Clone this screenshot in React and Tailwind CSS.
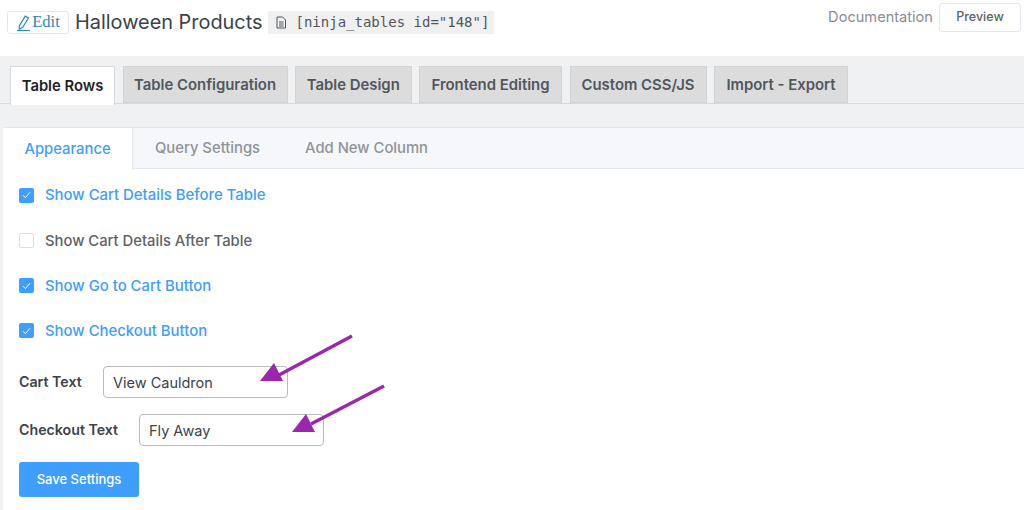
import React from 'react';

const mainTabs = [
  { label: 'Table Rows', active: true, width: 'w-[105px]' },
  { label: 'Table Configuration', width: 'w-[165px]' },
  { label: 'Table Design', width: 'w-[116.5px]' },
  { label: 'Frontend Editing', width: 'w-[143px]' },
  { label: 'Custom CSS/JS', width: 'w-[137px]' },
  { label: 'Import - Export', width: 'w-[134px]' },
];

const options = [
  { label: 'Show Cart Details Before Table', checked: true },
  { label: 'Show Cart Details After Table', checked: false },
  { label: 'Show Go to Cart Button', checked: true },
  { label: 'Show Checkout Button', checked: true },
];

const Checkbox = ({ checked }) => (
  <span
    className={
      checked
        ? 'flex h-[15px] w-[15px] items-center justify-center rounded-[2px] bg-[#409eff]'
        : 'flex h-[15px] w-[15px] items-center justify-center rounded-[2px] border border-[#dcdfe6] bg-white'
    }
  >
    {checked && (
      <svg width="9" height="8" viewBox="0 0 9 8" fill="none">
        <path d="M1 4.2 L3.4 6.6 L8 1.2" stroke="white" strokeWidth="1" />
      </svg>
    )}
  </span>
);

const App = () => {
  return (
    <div className="relative h-[510px] w-[1024px] overflow-hidden bg-[#f0f1f3] font-['Inter',sans-serif]">
      {/* Header */}
      <div className="flex h-14 items-start justify-between bg-white pl-[7px] pr-[3px]">
        <div className="flex items-center pt-[11px]">
          <div className="flex h-[23px] w-[62px] items-center justify-center gap-[1px] rounded-[3px] border border-[#e4e7ed] font-['Liberation_Serif',serif] text-[16.5px] text-[#2a8ab8]">
            <svg width="15" height="18" viewBox="0 0 14 16" fill="none" stroke="#2a8ab8" strokeWidth="1.1">
              <path d="M3.2 10.5 L8.6 1.6 L11.6 3.3 L6.2 12.2 L3 13.6 Z" />
              <path d="M1 15 H13" />
            </svg>
            Edit
          </div>
          <h1 className="ml-[6px] text-[19.9px] leading-[23px] font-normal text-[#3c434a]">Halloween Products</h1>
          <div className="ml-[5px] flex h-[23px] w-[226px] items-center gap-[9px] bg-[#f0f0f1] pl-[7px] font-['DejaVu_Sans_Mono',monospace] text-[14px] text-[#50575e]">
            <svg width="12" height="13" viewBox="0 0 12 13" fill="none" stroke="#50575e" strokeWidth="1">
              <path d="M2 1 H7.5 L10.5 4 V12 H2 Z" />
              <path d="M4 6 H8.5 M4 8 H8.5 M4 10 H8.5" />
            </svg>
            [ninja_tables id="148"]
          </div>
        </div>
        <div className="flex items-center gap-[6px] pt-[3px]">
          <span className="text-[14.6px] text-[#8a8d91]">Documentation</span>
          <div className="flex h-[29px] w-[82px] items-center justify-center rounded-[3px] border border-[#e4e7ed] text-[12.5px] font-medium text-[#606266]">
            Preview
          </div>
        </div>
      </div>

      {/* Main tabs */}
      <div className="h-[71px] pt-[10px]">
        <div className="flex h-[38px] gap-[7.5px] border-b border-[#d9dadc] pl-[10px]">
          {mainTabs.map((tab) => (
            <div
              key={tab.label}
              className={
                tab.active
                  ? `${tab.width} -mb-px flex h-[39px] items-center justify-center border border-b-0 border-[#d9dadc] bg-white text-[14.8px] font-semibold text-[#1d2327]`
                  : `${tab.width} flex items-center justify-center border border-[#d2d3d5] bg-[#dcdcdc] pt-px text-[14.9px] font-semibold text-[#50575e]`
              }
            >
              {tab.label}
            </div>
          ))}
        </div>
      </div>

      {/* Panel */}
      <div className="ml-[3px] h-[383px] bg-white">
        <div className="flex h-[42px] items-center border-b border-t border-[#e4e7ed] bg-[#f5f7fa] pt-px text-[14.8px] font-medium">
          <div className="-mt-px -mb-px flex h-[42px] w-[130px] items-center justify-center border-r border-[#e4e7ed] bg-white pt-px text-[#409eff]">
            Appearance
          </div>
          <div className="ml-[22px] text-[#909399]">Query Settings</div>
          <div className="ml-[45px] text-[#909399]">Add New Column</div>
        </div>

        <div className="pl-4 pt-4">
          <div className="flex flex-col gap-[25.3px]">
            {options.map((option) => (
              <div key={option.label} className="flex h-5 items-center gap-[11px]">
                <Checkbox checked={option.checked} />
                <span
                  className={
                    option.checked
                      ? 'pt-px text-[14.9px] font-medium text-[#409eff]'
                      : 'pt-px text-[14.8px] font-medium text-[#606266]'
                  }
                >
                  {option.label}
                </span>
              </div>
            ))}
          </div>

          <div className="mt-[25px] flex items-start">
            <label className="mt-[5px] w-[84px] text-[14.2px] font-semibold text-[#3c434a]">Cart Text</label>
            <div className="flex h-8 w-[185px] items-center rounded-[4px] border border-[#b9bbbe] pl-[9px] pt-px text-[14.5px] text-[#3c434a]">
              View Cauldron
            </div>
          </div>
          <div className="mt-4 flex items-start">
            <label className="mt-[5px] w-[120px] text-[14.2px] font-semibold text-[#3c434a]">Checkout Text</label>
            <div className="flex h-8 w-[185px] items-center rounded-[4px] border border-[#b9bbbe] pl-[9px] pt-px text-[14.5px] text-[#3c434a]">
              Fly Away
            </div>
          </div>
          <div className="mt-4 flex h-[35px] w-[120px] items-center justify-center rounded-[3px] bg-[#409eff] text-[13px] font-medium text-white">
            Save Settings
          </div>
        </div>
      </div>

      {/* Annotation arrows */}
      <svg className="absolute left-0 top-0" width="1024" height="510" viewBox="0 0 1024 510" fill="#9b27af">
        <path d="M352 336 L279 375" stroke="#9b27af" strokeWidth="3.5" />
        <path d="M260 381 L274 363 L283 381 Z" />
        <path d="M384 386 L311 424" stroke="#9b27af" strokeWidth="3.5" />
        <path d="M292 432 L306 414 L315 432 Z" />
      </svg>
    </div>
  );
};

export default App;
